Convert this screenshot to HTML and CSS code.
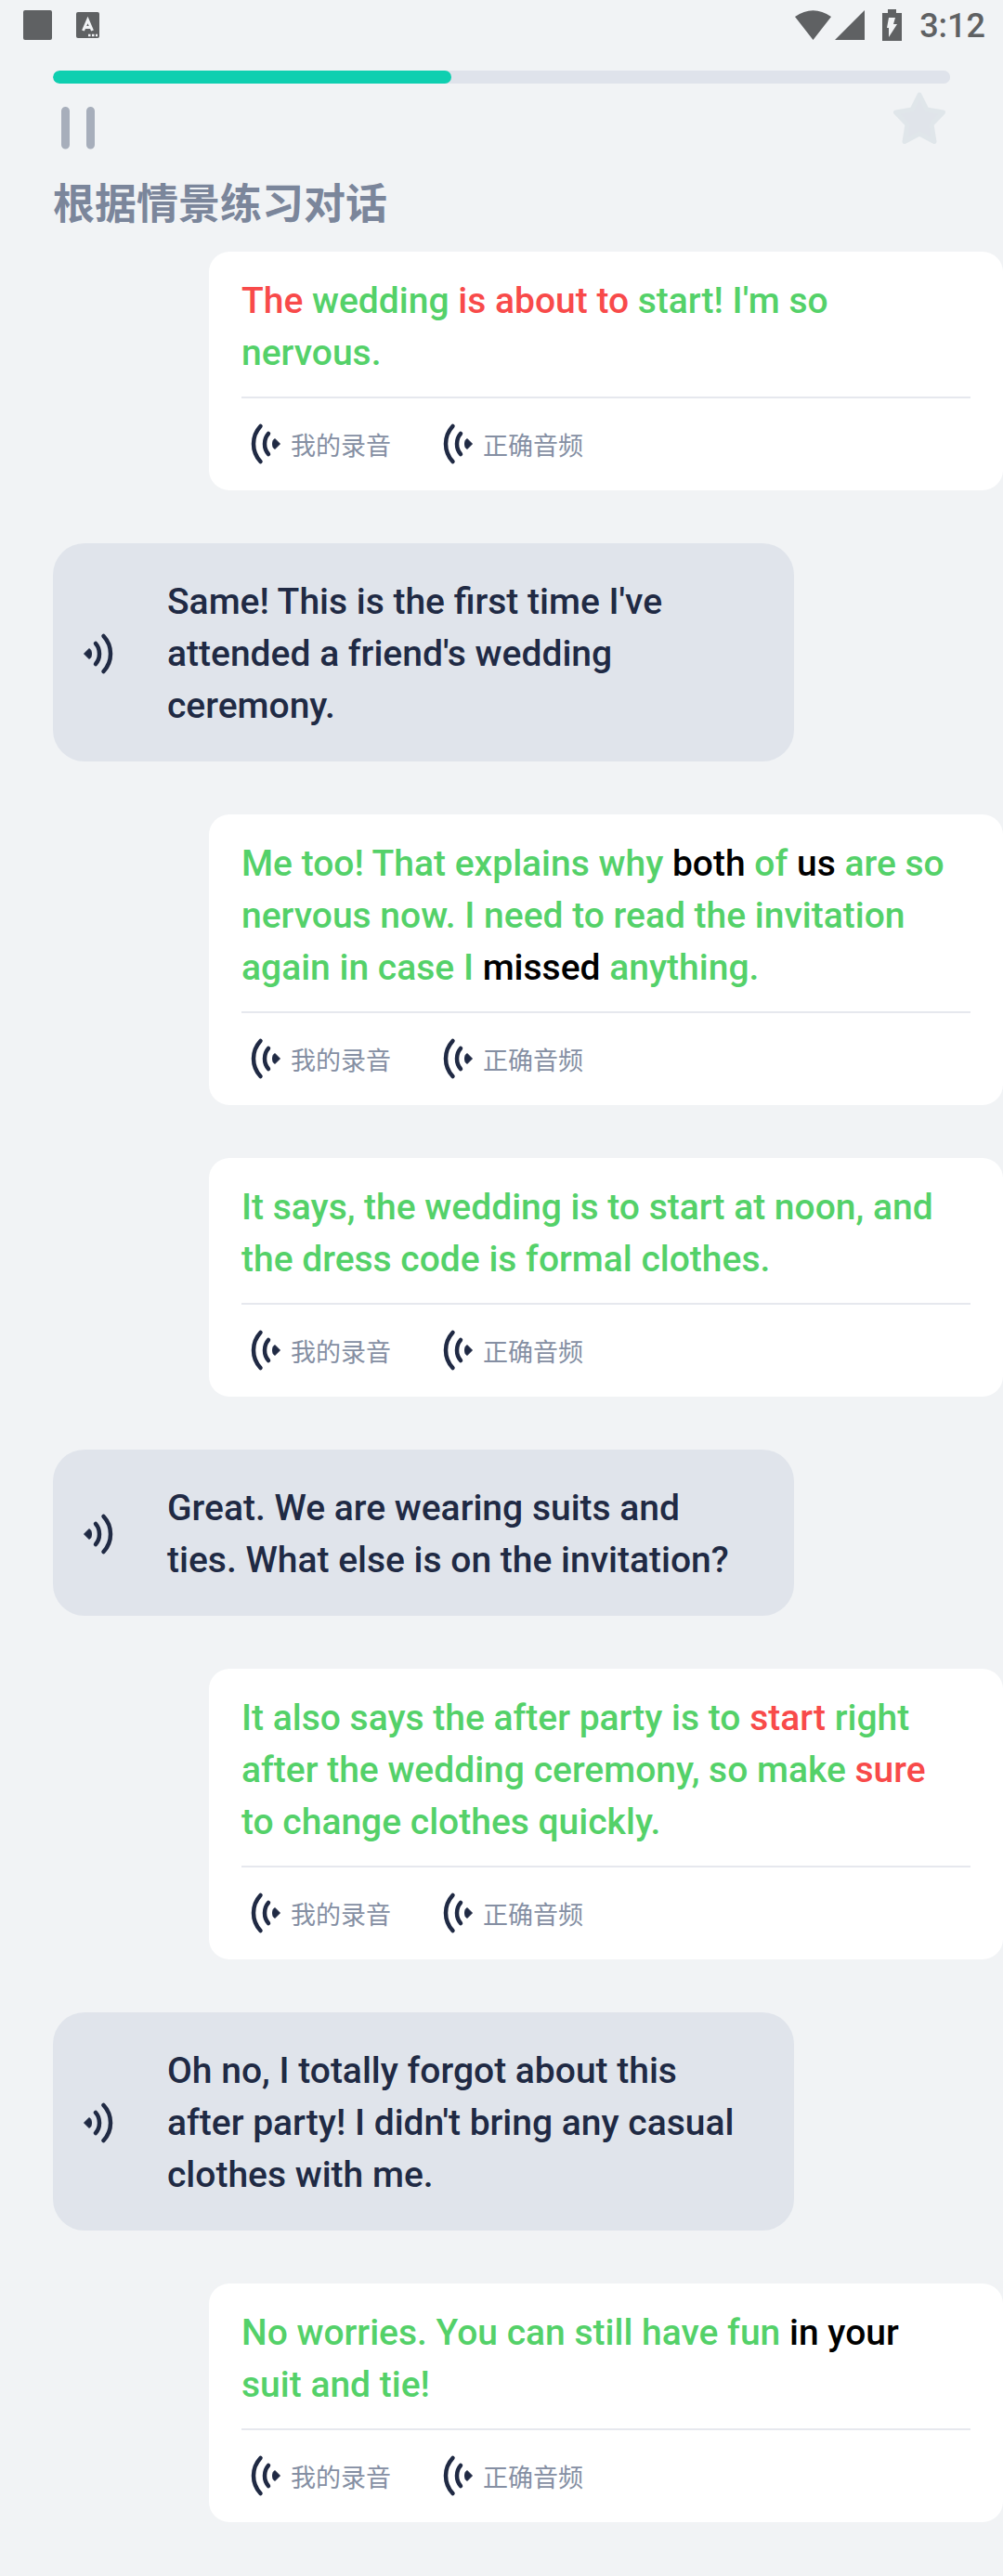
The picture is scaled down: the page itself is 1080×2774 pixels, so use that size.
FILE: index.html
```html
<!DOCTYPE html>
<html lang="zh-CN">
<head>
<meta charset="utf-8">
<meta name="viewport" content="width=device-width, initial-scale=1">
<title>根据情景练习对话</title>
<link rel="stylesheet" href="styles.css">
</head>
<body>
<svg class="sprite" aria-hidden="true">
  <symbol id="sound" viewBox="0 0 36 48">
    <path d="M2.500 24 8 18.500Q10.500 19.500 10.500 24T8 29.500Z" fill="currentColor" stroke="currentColor" stroke-linejoin="round"/>
    <path d="M15 13Q19 17.500 19 24T15 35M23.500 5Q31 13 31 24T23.500 43" fill="none" stroke="currentColor" stroke-width="4.500" stroke-linecap="round"/>
  </symbol>
</svg>
<header class="status">
  <div class="status-group status-left">
    <svg width="32" height="32" viewBox="0 0 32 32"><rect width="31" height="32" rx="2" fill="currentColor"/></svg>
    <svg width="26" height="28" viewBox="0 0 26 28"><rect width="25" height="28" rx="2" fill="currentColor"/><path d="M7.500 20 12.500 8.500 17.500 20M9 16.500H16" fill="none" stroke="#f1f3f5" stroke-width="3"/><path d="M13 25H23" stroke="#f1f3f5" stroke-width="2.500" stroke-dasharray="2.500 1.500"/></svg>
  </div>
  <div class="status-group status-right">
    <svg width="76" height="34" viewBox="0 0 76 34"><path d="M0 8Q19.500-5.500 39 8L19.500 33ZM75 1V33H43Z" fill="currentColor"/></svg>
    <svg width="22" height="34" viewBox="0 0 22 34"><path d="M0 4H6V0H15V4H21V34H0Z" fill="currentColor"/><path d="M7 9H14L12 16H16L7 30V20H5Z" fill="#f1f3f5"/></svg>
    <time class="clock">3:12</time>
  </div>
</header>
<main class="lesson">
  <progress class="progress" max="1000" value="444" aria-label="进度"></progress>
  <div class="toolbar">
    <button class="icon-button" type="button" aria-label="暂停"><svg width="54" height="66" viewBox="0 0 54 66"><path d="M13.500 21.500V58M40.500 21.500V58" stroke="#a7aebb" stroke-width="9" stroke-linecap="round"/></svg></button>
    <button class="icon-button" type="button" aria-label="收藏"><svg width="56" height="58" viewBox="0 0 56 58"><path d="M28 4 36 20 53.500 23 41 36 44 54.500 28 46 12 54.500 15 36 2.500 23 20 20Z" fill="#e0e4ea" stroke="#e0e6ea" stroke-width="5" stroke-linejoin="round"/></svg></button>
  </div>
  <h1 class="title">根据情景练习对话</h1>
  <div class="chat">
    <section class="mine">
      <p class="line"><span class="bad">The</span> wedding <span class="bad">is about to</span> start! I'm so nervous.</p>
      <div class="actions">
        <button class="audio" type="button"><svg class="wave flip"><use href="#sound"/></svg><span class="label">我的录音</span></button>
        <button class="audio" type="button"><svg class="wave flip"><use href="#sound"/></svg><span class="label">正确音频</span></button>
      </div>
    </section>
    <section class="partner">
      <button class="icon-button" type="button" aria-label="播放"><svg class="wave"><use href="#sound"/></svg></button>
      <p class="line">Same! This is the first time I've attended a friend's wedding ceremony.</p>
    </section>
    <section class="mine">
      <p class="line">Me too! That explains why <span class="missed">both</span> of <span class="missed">us</span> are so nervous now. I need to read the invitation again in case I <span class="missed">missed</span> anything.</p>
      <div class="actions">
        <button class="audio" type="button"><svg class="wave flip"><use href="#sound"/></svg><span class="label">我的录音</span></button>
        <button class="audio" type="button"><svg class="wave flip"><use href="#sound"/></svg><span class="label">正确音频</span></button>
      </div>
    </section>
    <section class="mine">
      <p class="line">It says, the wedding is to start at noon, and the dress code is formal clothes.</p>
      <div class="actions">
        <button class="audio" type="button"><svg class="wave flip"><use href="#sound"/></svg><span class="label">我的录音</span></button>
        <button class="audio" type="button"><svg class="wave flip"><use href="#sound"/></svg><span class="label">正确音频</span></button>
      </div>
    </section>
    <section class="partner">
      <button class="icon-button" type="button" aria-label="播放"><svg class="wave"><use href="#sound"/></svg></button>
      <p class="line">Great. We are wearing suits and ties. What else is on the invitation?</p>
    </section>
    <section class="mine">
      <p class="line">It also says the after party is to <span class="bad">start</span> right after the wedding ceremony, so make <span class="bad">sure</span> to change clothes quickly.</p>
      <div class="actions">
        <button class="audio" type="button"><svg class="wave flip"><use href="#sound"/></svg><span class="label">我的录音</span></button>
        <button class="audio" type="button"><svg class="wave flip"><use href="#sound"/></svg><span class="label">正确音频</span></button>
      </div>
    </section>
    <section class="partner">
      <button class="icon-button" type="button" aria-label="播放"><svg class="wave"><use href="#sound"/></svg></button>
      <p class="line">Oh no, I totally forgot about this after party! I didn't bring any casual clothes with me.</p>
    </section>
    <section class="mine">
      <p class="line">No worries. You can still have fun <span class="missed">in your</span> suit and tie!</p>
      <div class="actions">
        <button class="audio" type="button"><svg class="wave flip"><use href="#sound"/></svg><span class="label">我的录音</span></button>
        <button class="audio" type="button"><svg class="wave flip"><use href="#sound"/></svg><span class="label">正确音频</span></button>
      </div>
    </section>
  </div>
</main>
</body>
</html>
```
FILE: styles.css
```css
* { box-sizing: border-box; }
body {
  margin: 0;
  background: #f1f3f5;
  color: #202a44;
  font-family: Roboto, "Noto Sans CJK SC", sans-serif;
}
h1, p { margin: 0; }
button {
  padding: 0;
  border: 0;
  background: none;
  color: inherit;
  font: inherit;
  cursor: pointer;
}
svg { display: block; flex: none; }
.sprite { position: absolute; width: 0; height: 0; }

.status {
  display: flex;
  justify-content: space-between;
  align-items: center;
  height: 54px;
  padding: 0 19px 0 25px;
  color: #5f6163;
}
.status-group { display: flex; align-items: center; }
.status-left { gap: 25px; }
.status-right { gap: 18px; }
.clock { padding-top: 2px; font-size: 36px; font-weight: 500; line-height: 52px; }

.lesson { padding: 22px 0 58px; }
.progress {
  display: block;
  appearance: none;
  width: calc(100% - 114px);
  height: 14px;
  margin: 0 57px;
  border: 0;
  border-radius: 7px;
  overflow: hidden;
  background: #dfe3eb;
}
.progress::-webkit-progress-bar { background: #dfe3eb; border-radius: 7px; }
.progress::-webkit-progress-value { background: #0fcfb0; border-radius: 7px; }
.toolbar {
  display: flex;
  justify-content: space-between;
  align-items: flex-start;
  padding: 8px 62px 0 57px;
}
.title {
  padding: 22px 57px 16px;
  color: #7b869b;
  font-size: 45px;
  font-weight: 700;
  line-height: 69px;
}
.chat { display: flex; flex-direction: column; gap: 57px; }
.line { font-size: 39px; font-weight: 500; line-height: 56px; }

.mine {
  margin-left: 225px;
  padding: 25px 35px;
  border-radius: 22px;
  background: #fff;
  color: #54d169;
}
.mine .line { padding-right: 14px; }
.bad { color: #f84a4a; }
.missed { color: #000; }
.actions {
  display: flex;
  gap: 46px;
  margin-top: 19px;
  padding-top: 24px;
  border-top: 2px solid #e6e8ee;
}
.audio {
  display: flex;
  align-items: center;
  gap: 9px;
  height: 50px;
  padding-left: 8px;
  color: #858fa3;
  font-size: 27px;
  line-height: 40px;
}
.label { padding-top: 6px; }
.wave { width: 36px; height: 48px; color: #202a44; }
.flip { transform: scaleX(-1); }

.partner {
  display: flex;
  align-items: center;
  gap: 56px;
  width: 798px;
  max-width: calc(100% - 57px);
  margin-left: 57px;
  padding: 35px 50px 32px 31px;
  border-radius: 34px;
  background: #e0e4eb;
}
```
